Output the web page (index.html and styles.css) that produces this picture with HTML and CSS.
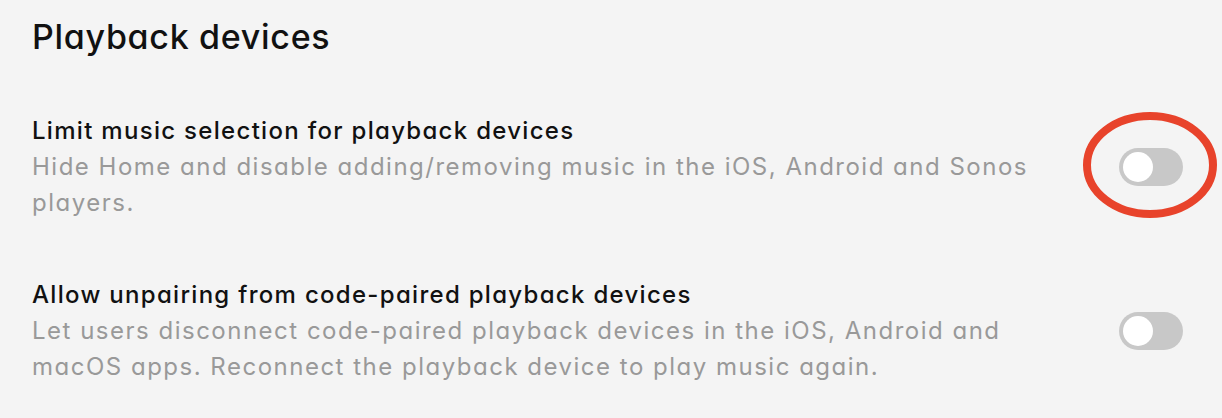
FILE: index.html
```html
<!DOCTYPE html>
<html lang="en">
<head>
    <meta charset="UTF-8">
    <meta name="viewport" content="width=device-width, initial-scale=1.0">
    <title>Playback devices</title>
    <link rel="stylesheet" href="styles.css">
</head>
<body>
<div class="container">
    <h1>Playback devices</h1>

    <div class="setting">
        <div class="text">
            <div class="label">Limit music selection for playback devices</div>
            <div class="desc">Hide Home and disable adding/removing music in the iOS, Android and Sonos players.</div>
        </div>
        <label class="switch">
            <input type="checkbox">
            <span class="track"></span>
            <svg class="ring" width="140" height="112" viewBox="0 0 140 112">
                <ellipse cx="70" cy="56" rx="63" ry="49" fill="none" stroke="#e8432b" stroke-width="8"/>
            </svg>
        </label>
    </div>

    <div class="setting">
        <div class="text">
            <div class="label">Allow unpairing from code-paired playback devices</div>
            <div class="desc">Let users disconnect code-paired playback devices in the iOS, Android and macOS apps. Reconnect the playback device to play music again.</div>
        </div>
        <label class="switch">
            <input type="checkbox">
            <span class="track"></span>
        </label>
    </div>
</div>
</body>
</html>
```

FILE: styles.css
```css
body { margin: 0; background: #f4f4f4; font-family: Inter, "Noto Sans", sans-serif; font-feature-settings: "cv11"; color: #111; }
.container { padding: 17px 39px 0 32px; }
h1 { margin: 0 0 56px; font-size: 34px; font-weight: 500; line-height: 40px; letter-spacing: 0.7px; }
.setting { display: flex; align-items: center; justify-content: space-between; margin-bottom: 56px; }
.setting:last-child { margin-bottom: 0; }
.text { width: 1040px; }
.label { font-size: 24px; line-height: 36px; font-weight: 500; letter-spacing: 1.3px; }
.desc { font-size: 24px; line-height: 36px; color: #999; letter-spacing: 1.5px; }
.switch { position: relative; display: inline-block; width: 64px; height: 38px; flex-shrink: 0; }
.switch input { opacity: 0; width: 0; height: 0; margin: 0; }
.track { position: absolute; top: 0; left: 0; right: 0; bottom: 0; background: #c8c8c8; border-radius: 19px; }
.track:before { position: absolute; content: ""; width: 30px; height: 30px; left: 4px; top: 4px; background: #fff; border-radius: 50%; }
.ring { position: absolute; left: -39px; top: -39px; pointer-events: none; }
```
